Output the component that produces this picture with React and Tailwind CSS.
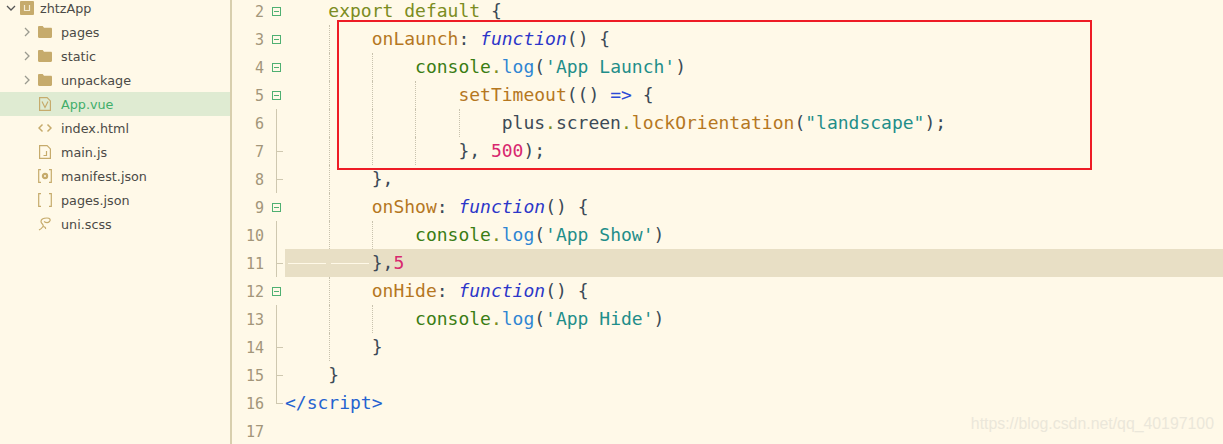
const gold = '#c6ab6c'

function Chevron({ open }) {
  return (
    <svg width="10" height="10" viewBox="0 0 10 10" fill="none" stroke={open ? '#555' : '#9b9b90'} strokeWidth="1.3">
      {open ? <path d="M1 3l4 4 4-4" /> : <path d="M3 1l4 4-4 4" />}
    </svg>
  )
}

function RootIcon() {
  return (
    <svg width="14" height="14" viewBox="0 0 14 14">
      <rect width="14" height="14" rx="1" fill={gold} />
      <path d="M4.500 4v5.500h5V4" fill="none" stroke="#f4ecd4" strokeWidth="1.2" />
    </svg>
  )
}

function FolderIcon() {
  return (
    <svg width="14" height="12" viewBox="0 0 14 12">
      <path d="M0 1.200C0 .5.5 0 1.200 0h3.500L6 1.800h6.800c.7 0 1.200.5 1.200 1.200v7.800c0 .7-.5 1.200-1.200 1.200H1.200C.5 12 0 11.500 0 10.800z" fill={gold} />
    </svg>
  )
}

function FileIcon({ type }) {
  const s = { fill: 'none', stroke: gold, strokeWidth: 1.2 }
  if (type === 'vue') return (
    <svg width="12" height="14" viewBox="0 0 12 14" {...s}>
      <path d="M.6.600h7.500l3.300 3.300v9.500H.6z" />
      <path d="M3 4.500l3 6 3-6" />
    </svg>
  )
  if (type === 'html') return (
    <svg width="14" height="10" viewBox="0 0 14 10" {...s} strokeWidth="1.5">
      <path d="M4.500 1.500L1 5l3.500 3.500M9.500 1.500L13 5 9.500 8.500" />
    </svg>
  )
  if (type === 'js') return (
    <svg width="12" height="14" viewBox="0 0 12 14" {...s}>
      <path d="M.6.600h7.500l3.300 3.300v9.500H.6z" />
      <path d="M7.500 6v4.500H4.500" />
    </svg>
  )
  if (type === 'manifest') return (
    <svg width="14" height="14" viewBox="0 0 14 14" {...s}>
      <path d="M3 .7H.7v12.600H3M11 .7h2.300v12.600H11" />
      <circle cx="7" cy="7" r="2.600" fill={gold} />
      <circle cx="7" cy="7" r="1" fill="#fff9e8" stroke="none" />
    </svg>
  )
  if (type === 'json') return (
    <svg width="14" height="14" viewBox="0 0 14 14" {...s}>
      <path d="M3 .7H.7v12.600H3M11 .7h2.300v12.600H11" />
    </svg>
  )
  return (
    <svg width="14" height="14" viewBox="0 0 14 14" {...s}>
      <path d="M1 13c2-1 3-2 4-3.500C6.500 7.500 3 7 3 4.500 3 2 6 1 9 1c3 0 4 2 2.500 3.500C10 6 7.500 5.500 6 4.500M5 9.500c1.500 0 3 1 2.500 2.500" />
    </svg>
  )
}

const tree = [
  { name: 'pages', folder: true },
  { name: 'static', folder: true },
  { name: 'unpackage', folder: true },
  { name: 'App.vue', icon: 'vue', active: true },
  { name: 'index.html', icon: 'html' },
  { name: 'main.js', icon: 'js' },
  { name: 'manifest.json', icon: 'manifest' },
  { name: 'pages.json', icon: 'json' },
  { name: 'uni.scss', icon: 'scss' },
]

function Sidebar() {
  return (
    <div className="w-[232px] shrink-0 border-r-2 border-[#d8cfae] -mt-1 font-['DejaVu_Sans',sans-serif] text-[12.75px] text-[#4b4a46]">
      <div className="h-6 flex items-center pl-[2px]">
        <span className="w-[18px] flex justify-center"><Chevron open /></span>
        <RootIcon />
        <span className="ml-[6px] pt-[2px]">zhtzApp</span>
      </div>
      {tree.map((item) => (
        <div key={item.name} className={`h-6 flex items-center ${item.active ? 'bg-[#dfebd2] text-[#3fae6a]' : ''}`}>
          <span className="w-[22px] ml-[16px] flex justify-center">{item.folder && <Chevron />}</span>
          <span className="w-[16px] mr-[8px] -ml-[1px] flex justify-center">
            {item.folder ? <FolderIcon /> : <FileIcon type={item.icon} />}
          </span>
          <span className="pt-[2px]">{item.name}</span>
        </div>
      ))}
    </div>
  )
}

const c = {
  kw: 'text-[#7b8c22]',
  prop: 'text-[#b5771f]',
  fn: 'text-[#2c36c9] italic',
  p: 'text-[#3c4a56]',
  obj: 'text-[#3a7d14]',
  dot: 'text-[#7b8c22]',
  method: 'text-[#2f86d3]',
  str: 'text-[#1f8e8a]',
  op: 'text-[#2b4bd6]',
  num: 'text-[#d8286f]',
  tag: 'text-[#2563d0]',
}

const log = (msg) => [
  ['            ', 'p'], ['console', 'obj'], ['.', 'dot'], ['log', 'method'], ['(', 'p'], [`'${msg}'`, 'str'], [')', 'p'],
]

const lines = [
  { n: 2, fold: 'box', tokens: [['    ', 'p'], ['export default', 'kw'], [' {', 'p']] },
  { n: 3, fold: 'box', guides: [44], tokens: [['        ', 'p'], ['onLaunch', 'prop'], [': ', 'p'], ['function', 'fn'], ['() {', 'p']] },
  { n: 4, fold: 'box', guides: [44, 87], tokens: log('App Launch') },
  { n: 5, fold: 'box', guides: [44, 87, 130], tokens: [['                ', 'p'], ['setTimeout', 'prop'], ['(() ', 'p'], ['=>', 'op'], [' {', 'p']] },
  { n: 6, fold: 'line', guides: [44, 87, 130, 174], tokens: [['                    plus', 'p'], ['.', 'dot'], ['screen', 'p'], ['.', 'dot'], ['lockOrientation', 'prop'], ['(', 'p'], ['"landscape"', 'str'], [');', 'p']] },
  { n: 7, fold: 'tick', guides: [44, 87, 130], tokens: [['                }, ', 'p'], ['500', 'num'], [');', 'p']] },
  { n: 8, fold: 'tick', guides: [44], tokens: [['        },', 'p']] },
  { n: 9, fold: 'box', guides: [44], tokens: [['        ', 'p'], ['onShow', 'prop'], [': ', 'p'], ['function', 'fn'], ['() {', 'p']] },
  { n: 10, fold: 'line', guides: [44, 87], tokens: log('App Show') },
  { n: 11, fold: 'tick', current: true, tokens: [['        },', 'p'], ['5', 'num']] },
  { n: 12, fold: 'box', guides: [44], tokens: [['        ', 'p'], ['onHide', 'prop'], [': ', 'p'], ['function', 'fn'], ['() {', 'p']] },
  { n: 13, fold: 'line', guides: [44, 87], tokens: log('App Hide') },
  { n: 14, fold: 'tick', guides: [44], tokens: [['        }', 'p']] },
  { n: 15, fold: 'tick', tokens: [['    }', 'p']] },
  { n: 16, fold: 'end', tokens: [['</script>', 'tag']] },
  { n: 17, tokens: [] },
]

function FoldMark({ type }) {
  if (type === 'box') {
    return (
      <span className="absolute left-[8px] top-[10px] w-[9px] h-[9px] border border-[#4fb072] flex items-center justify-center">
        <span className="w-[5px] h-px bg-[#4fb072]" />
      </span>
    )
  }
  return (
    <>
      {type && <span className={`absolute left-[12px] top-0 w-px bg-[#cfc8b0] ${type === 'end' ? 'h-[14px]' : 'h-7'}`} />}
      {(type === 'tick' || type === 'end') && <span className="absolute left-[12px] top-[14px] w-[7px] h-px bg-[#cfc8b0]" />}
    </>
  )
}

function CodeLine({ line }) {
  return (
    <div className="h-7 flex">
      <div className="w-[32px] shrink-0 pt-px text-right text-[15px] leading-7 text-[#a3967a]">{line.n}</div>
      <div className="w-[21px] shrink-0 relative"><FoldMark type={line.fold} /></div>
      <div className={`flex-1 relative whitespace-pre text-[18px] leading-7 ${line.current ? 'bg-[#e8dfc5]' : ''}`}>
        {(line.guides || []).map((x, i) => (
          <span key={i} className="absolute top-0 h-7 border-l border-dotted border-[#c8c2ad]" style={{ left: x }} />
        ))}
        {line.current && (
          <>
            <span className="absolute left-[3px] top-[14px] w-[38px] h-px bg-[#fff9e8]" />
            <span className="absolute left-[46px] top-[14px] w-[38px] h-px bg-[#fff9e8]" />
          </>
        )}
        {line.tokens.map(([text, kind], i) => (
          <span key={i} className={c[kind]}>{text}</span>
        ))}
      </div>
    </div>
  )
}

export default function App() {
  return (
    <div className="relative w-[1223px] h-[444px] overflow-hidden flex bg-[#fff9e8]">
      <Sidebar />
      <div className="flex-1 -mt-[3px] font-['DejaVu_Sans_Mono',monospace]">
        {lines.map((line) => <CodeLine key={line.n} line={line} />)}
      </div>

      {/* annotation drawn over the code */}
      <div className="absolute left-[337px] top-[20px] w-[755px] h-[150px] border-2 border-[#ee1c25]" />
      <div className="absolute right-[9px] bottom-[8px] font-['Liberation_Sans',sans-serif] text-[15.85px] text-[#ebe7da]">
        https://blog.csdn.net/qq_40197100
      </div>
    </div>
  )
}
